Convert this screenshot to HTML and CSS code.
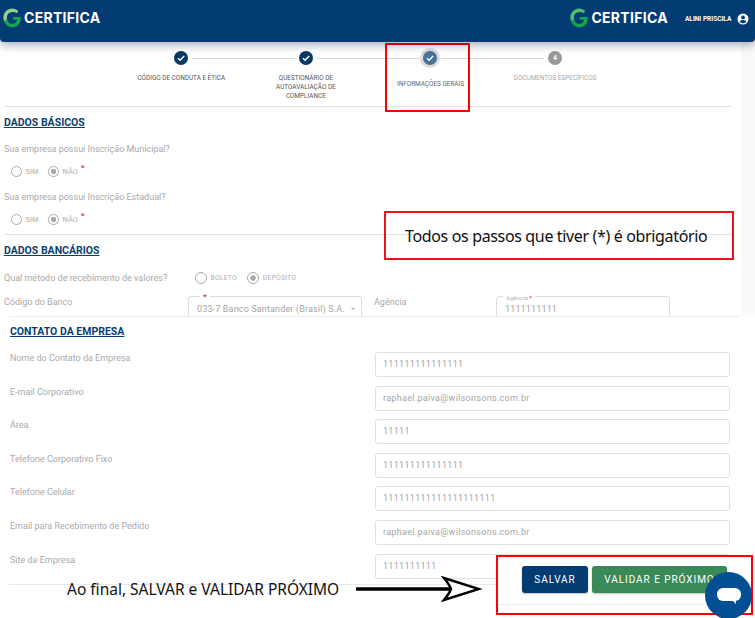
FILE: index.html
```html
<!DOCTYPE html>
<html lang="pt-BR">
<head>
<meta charset="utf-8">
<title>Certifica</title>
<link rel="stylesheet" href="styles.css">
</head>
<body>
<div class="page">
  <header class="topbar">
    <div class="brand">
      <svg class="logo" viewBox="0 0 20 22"><path d="M17 3.200A9.500 9.500 0 0 0 4 2.600C.2 5.600-.6 11 1.600 15l3-2.600C3.800 9.500 5 6.200 8 5c3-1.200 5.500-.6 7.300.6z" fill="#8fd08a"/><path d="M1.200 14.200C3 19.400 8 22 12.500 21c3.500-.8 6.500-3.500 7-7.500V10H11v3h4.800c-.5 2.500-2.500 4.300-5 4.500-3 .2-5.300-1.500-6-4.600z" fill="#11a84a"/></svg>
      <span class="brand-name">CERTIFICA</span>
    </div>
    <div class="user">
      <div class="brand">
        <svg class="logo" viewBox="0 0 20 22"><path d="M17 3.200A9.500 9.500 0 0 0 4 2.600C.2 5.600-.6 11 1.600 15l3-2.600C3.800 9.500 5 6.200 8 5c3-1.200 5.500-.6 7.300.6z" fill="#4fbf6a"/><path d="M1.200 14.200C3 19.400 8 22 12.500 21c3.500-.8 6.500-3.500 7-7.500V10H11v3h4.800c-.5 2.500-2.500 4.300-5 4.500-3 .2-5.300-1.500-6-4.600z" fill="#11a84a"/></svg>
        <span class="brand-name">CERTIFICA</span>
      </div>
      <span class="user-name">ALINI PRISCILA</span>
      <svg class="user-icon" viewBox="0 0 24 24"><path fill="#fff" d="M12 1a11 11 0 1 0 0 22 11 11 0 0 0 0-22zm0 4a3.800 3.800 0 1 1 0 7.600A3.800 3.800 0 0 1 12 5zm0 15.500c-2.800 0-5.300-1.400-6.800-3.600 1.500-2 4.500-3 6.800-3s5.300 1 6.800 3c-1.500 2.200-4 3.600-6.800 3.600z"/></svg>
    </div>
  </header>

  <main class="content">
    <ol class="steps">
      <li class="step done">
        <span class="dot"><svg viewBox="0 0 12 12"><path d="M3 6.200l2.100 2L9.200 4" fill="none" stroke="#fff" stroke-width="1.400"/></svg></span>
        <span class="step-label">CÓDIGO DE CONDUTA E ÉTICA</span>
      </li>
      <li class="step done">
        <span class="dot"><svg viewBox="0 0 12 12"><path d="M3 6.200l2.100 2L9.200 4" fill="none" stroke="#fff" stroke-width="1.400"/></svg></span>
        <span class="step-label">QUESTIONÁRIO DE AUTOAVALIAÇÃO DE COMPLIANCE</span>
      </li>
      <li class="step current">
        <span class="dot"><svg viewBox="0 0 12 12"><path d="M3 6.200l2.100 2L9.200 4" fill="none" stroke="#fff" stroke-width="1.400"/></svg></span>
        <span class="step-label">INFORMAÇÕES GERAIS</span>
      </li>
      <li class="step todo">
        <span class="dot">4</span>
        <span class="step-label">DOCUMENTOS ESPECÍFICOS</span>
      </li>
    </ol>

    <section class="section basics">
      <h2 class="section-title">DADOS BÁSICOS</h2>
      <p class="question">Sua empresa possui Inscrição Municipal?</p>
      <div class="radios">
        <span class="radio"></span><span class="radio-text">SIM</span>
        <span class="radio checked"></span><span class="radio-text">NÃO</span><span class="star">*</span>
      </div>
      <p class="question second">Sua empresa possui Inscrição Estadual?</p>
      <div class="radios">
        <span class="radio"></span><span class="radio-text">SIM</span>
        <span class="radio checked"></span><span class="radio-text">NÃO</span><span class="star">*</span>
      </div>
    </section>

    <section class="section bank">
      <h2 class="section-title">DADOS BANCÁRIOS</h2>
      <div class="method">
        <p class="question">Qual método de recebimento de valores?</p>
        <div class="radios inline">
          <span class="radio"></span><span class="radio-text">BOLETO</span>
          <span class="radio checked"></span><span class="radio-text">DEPÓSITO</span>
        </div>
      </div>
      <div class="bank-row">
        <span class="question bank-code">Código do Banco</span>
        <div class="outlined select">
          <span class="legend-star">*</span>
          <span class="value">033-7 Banco Santander (Brasil) S.A.</span>
          <span class="caret"></span>
        </div>
        <span class="question agency">Agência</span>
        <div class="outlined">
          <span class="legend">Agência <b>*</b></span>
          <span class="value">1111111111</span>
        </div>
      </div>
    </section>

    <section class="contact">
      <h2 class="section-title">CONTATO DA EMPRESA</h2>
      <div class="contact-rows">
        <div class="row"><label class="row-label">Nome do Contato da Empresa</label><div class="field">111111111111111</div></div>
        <div class="row"><label class="row-label">E-mail Corporativo</label><div class="field">raphael.paiva@wilsonsons.com.br</div></div>
        <div class="row"><label class="row-label">Área</label><div class="field">11111</div></div>
        <div class="row"><label class="row-label">Telefone Corporativo Fixo</label><div class="field">111111111111111</div></div>
        <div class="row"><label class="row-label">Telefone Celular</label><div class="field">111111111111111111111</div></div>
        <div class="row"><label class="row-label">Email para Recebimento de Pedido</label><div class="field">raphael.paiva@wilsonsons.com.br</div></div>
        <div class="row"><label class="row-label">Site da Empresa</label><div class="field">1111111111</div></div>
      </div>
    </section>
  </main>

  <div class="callout step-mark"></div>
  <div class="callout note">Todos os passos que tiver (*) é obrigatório</div>
  <div class="callout actions">
    <button class="btn save">SALVAR</button>
    <button class="btn next">VALIDAR E PRÓXIMO</button>
  </div>
  <div class="final-note">Ao final, SALVAR e VALIDAR PRÓXIMO</div>
  <svg class="arrow" viewBox="0 0 126 26"><path d="M0 13H96" stroke="#000" stroke-width="3.500"/><path d="M88 2c4 5 6 8 7 11-1 3-3 6-7 11l35-11z" fill="#fff" stroke="#000" stroke-width="2.500"/></svg>
  <div class="chat"><span class="chat-bubble"></span></div>
</div>
</body>
</html>
```

FILE: styles.css
```css
* { box-sizing: border-box; }
html, body { margin: 0; padding: 0; }
body { background: #fff; font-family: Roboto, "Liberation Sans", sans-serif; overflow: hidden; }
.page { position: relative; width: 755px; height: 618px; overflow: hidden; }

.topbar {
  height: 42px;
  background: #033b73;
  border-radius: 0 0 4px 4px;
  box-shadow: 0 3px 10px rgba(0, 20, 60, .35);
  display: flex;
  justify-content: space-between;
  align-items: center;
  padding: 0 6px 6px 3px;
  position: relative;
  z-index: 2;
}
.brand { display: flex; align-items: center; gap: 3px; }
.logo { width: 18px; height: 20px; display: block; }
.brand-name { font-family: Inter, Roboto, sans-serif; font-weight: 700; font-size: 14px; letter-spacing: .3px; color: #fff; line-height: 20px; }
.user { display: flex; align-items: center; }
.user-name { font-size: 6.500px; font-weight: 700; color: #fff; margin-left: 17px; width: 46px; white-space: nowrap; padding-top: 1px; }
.user-icon { width: 12px; height: 12px; margin-left: 6px; margin-top: 1px; }

.content { height: 576px; position: relative; }
.content::after { content: ""; position: absolute; right: 0; top: 0; width: 12px; height: 274px; background: #fafafa; border-left: 1px solid #f2f2f2; }
.steps {
  list-style: none;
  margin: 0 23px 0 4px;
  padding: 9px 0 0 115px;
  display: flex;
  height: 65px;
  border-bottom: 1px solid #e3e3e3;
}
.step { width: 124.600px; display: flex; flex-direction: column; align-items: center; position: relative; text-align: center; }
.step::after { content: ""; position: absolute; left: 73px; width: 103px; top: 7px; height: 1px; background: #d8d8d8; }
.step:last-child::after { display: none; }
.dot { width: 14px; height: 14px; border-radius: 50%; background: #073866; display: flex; align-items: center; justify-content: center; color: #fff; font-size: 6.500px; font-weight: 700; flex: none; }
.dot svg { width: 12px; height: 12px; }
.step-label { font-size: 6.400px; line-height: 8.800px; color: #555; margin-top: 9px; width: 100px; }
.current .dot { background: #4a7199; box-shadow: 0 0 0 3px #dcdcdc; }
.current .step-label { margin-top: 15px; color: #666; }
.todo .dot { background: #9a9a9a; }
.todo .step-label { color: #a8a8a8; }

.section { margin: 0 23px 0 4px; }
.section-title { margin: 0; font-size: 10.500px; line-height: 12px; font-weight: 700; color: #0c3e75; text-decoration: underline; }
.question { margin: 0; font-size: 9px; line-height: 12px; color: #a9a9a9; }
.basics { padding-top: 10px; height: 128px; border-bottom: 1px solid #e3e3e3; }
.basics .section-title + .question { margin-top: 14px; }
.question.second { margin-top: 14px; }
.radios { display: flex; align-items: center; height: 12px; margin-top: 10px; padding-left: 6.500px; }
.second + .radios { margin-top: 10px; }
.radio { width: 11px; height: 11px; border: 1px solid #aaa; border-radius: 50%; flex: none; background: #fff; }
.radio.checked { background: radial-gradient(circle, #aaa 0 2.500px, #fff 3px); margin-left: 9px; }
.radio-text { font-size: 7.500px; color: #b0b0b0; margin-left: 4px; }
.star, .legend b, .legend-star { color: #d9343d; font-weight: 700; }
.star { font-size: 8px; margin-left: 3px; margin-top: -7px; }

.bank { padding-top: 10px; height: 81px; }
.method { display: flex; align-items: center; margin-top: 15px; height: 12px; }
.method .question { width: 190.500px; flex: none; }
.radios.inline { margin: 0; padding: 0; }
.radios.inline .radio { width: 12px; height: 12px; }
.radios.inline .checked { margin-left: 10px; }
.radios.inline .radio-text { font-size: 6.800px; letter-spacing: .2px; }

.bank-row { display: flex; margin-top: 12px; }
.bank-code { width: 184px; flex: none; }
.agency { width: 122px; margin-left: 12px; flex: none; }
.outlined {
  width: 174px; height: 30px; border: 1px solid #ddd; border-radius: 3px; flex: none;
  position: relative; padding: 6px 8px 0; font-size: 9px; color: #a5a5a5; letter-spacing: .15px;
}
.value { line-height: 12px; display: block; }
.select .value { white-space: nowrap; }
.legend { position: absolute; left: 6px; top: -3px; background: #fff; padding: 0 3px; font-size: 6px; line-height: 7px; color: #b5b5b5; letter-spacing: 0; }
.legend-star { position: absolute; left: 11px; top: -4px; background: #fff; padding: 0 3px; font-size: 8px; line-height: 7px; }
.caret { position: absolute; right: 6px; top: 11px; border: 2.500px solid transparent; border-top-color: #aaa; }

.contact { position: absolute; left: 9px; right: 14px; top: 274px; height: 302px; background: #fff; border-top: 1px solid #ececec; padding-top: 9px; }
.contact .section-title { margin-left: 1px; }
.contact-rows { margin-top: 14px; height: 233px; border-bottom: 1px solid #e8e8e8; }
.row { display: flex; height: 33.600px; }
.row-label { width: 366px; font-size: 9px; color: #aaa; line-height: 12px; flex: none; padding: 0 0 0 1px; }
.field { width: 355px; height: 25px; border: 1px solid #e0e0e0; border-radius: 3px; font-size: 9px; color: #a5a5a5; letter-spacing: .3px; line-height: 23px; padding-left: 7px; }

.callout { position: absolute; }
.step-mark { left: 385px; top: 43px; width: 85px; height: 69px; border: 2px solid #f00; }
.note { left: 384px; top: 211px; width: 350px; height: 49px; border: 2px solid #e8131b; color: #111; font: 16px/46px "Noto Sans", sans-serif; letter-spacing: -.35px; padding-left: 19px; white-space: nowrap; }
.actions { left: 496px; top: 555px; width: 257px; height: 60px; border: 2px solid #f00; background: #fff; display: flex; gap: 4px; padding: 9px 0 0 24px; align-items: flex-start; }
.actions::after { content: ""; position: absolute; left: 0; right: 0; bottom: 8px; height: 1px; background: #ececec; }
.btn { height: 27px; border: 0; border-radius: 3px; color: #fff; font: 400 10px/27px Roboto, sans-serif; letter-spacing: .95px; padding: 0; box-shadow: 0 1px 2px rgba(0, 0, 0, .25); }
.save { width: 66px; background: #033b73; }
.next { width: 135px; background: #3a8a59; }

.final-note { position: absolute; left: 67px; top: 578px; color: #111; font: 15.500px/22px "Noto Sans", sans-serif; white-space: nowrap; }
.arrow { position: absolute; left: 356px; top: 576px; width: 126px; height: 26px; }
.chat { position: absolute; left: 705px; top: 572px; width: 47px; height: 47px; border-radius: 50%; background: #034f93; display: flex; align-items: center; justify-content: center; }
.chat-bubble { width: 24px; height: 13px; background: #fff; border-radius: 6px; margin-top: -2px; position: relative; }
.chat-bubble::after { content: ""; position: absolute; right: 5px; bottom: -3px; border: 2px solid transparent; border-top-color: #fff; border-right-color: #fff; }
```
